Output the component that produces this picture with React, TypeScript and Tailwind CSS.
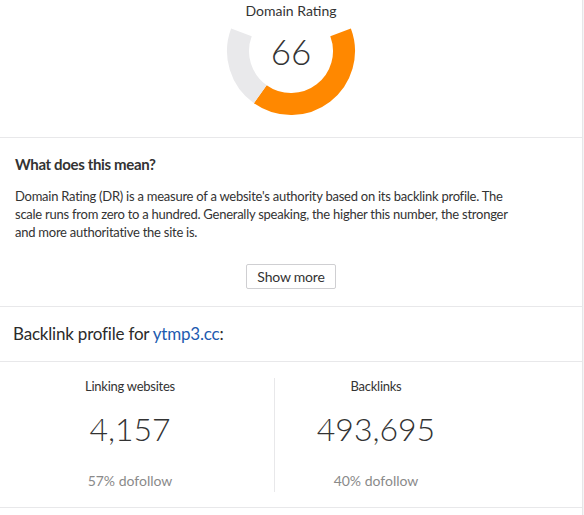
import React from "react";

const CX = 65;
const CY = 27;
const R = 53;

function pt(deg: number) {
  const a = (deg * Math.PI) / 180;
  return `${(CX + R * Math.sin(a)).toFixed(2)} ${(CY - R * Math.cos(a)).toFixed(2)}`;
}

function Gauge({ value }: { value: number }) {
  const start = 69.3;
  const end = 290.7;
  const mid = start + ((end - start) * value) / 100;
  return (
    <div className="relative w-[130px] h-[94px]">
      <svg width="130" height="94" viewBox="0 0 130 94">
        <path
          d={`M ${pt(start)} A ${R} ${R} 0 0 1 ${pt(mid)}`}
          fill="none"
          stroke="#ff8800"
          strokeWidth="22"
        />
        <path
          d={`M ${pt(mid)} A ${R} ${R} 0 0 1 ${pt(end)}`}
          fill="none"
          stroke="#e9e9eb"
          strokeWidth="22"
        />
      </svg>
      <div className="absolute left-0 right-0 top-[6px] text-center text-[35px] leading-[42px] font-light text-[#333]">
        {value}
      </div>
    </div>
  );
}

function Stat({ label, value, sub }: { label: string; value: string; sub: string }) {
  return (
    <div className="flex flex-col items-center pb-[3px]">
      <div className="text-[13px] leading-[17px] tracking-[-0.25px] text-[#333]">{label}</div>
      <div className="mt-[15px] text-[32px] leading-[38px] font-light text-[#333]">{value}</div>
      <div className="mt-[24px] text-[14px] leading-[17px] text-[#8a8a8a]">{sub}</div>
    </div>
  );
}

export default function App() {
  return (
    <div className="min-h-[515px] bg-[#f5f5f6] font-['Lato','Noto_Sans',sans-serif]">
      <div className="w-[583px] min-h-[515px] bg-white border-r border-[#e6e6e8]">
        <section className="flex flex-col items-center pt-[2px] pb-[19px] border-b border-[#e8e8ea]">
          <div className="text-[14px] leading-[17px] text-[#333]">Domain Rating</div>
          <div className="mt-[5px]">
            <Gauge value={66} />
          </div>
        </section>

        <section className="px-[15px] pt-[17px] pb-[17px] border-b border-[#e8e8ea]">
          <h3 className="text-[15px] leading-[18px] font-bold tracking-[-0.35px] text-[#333]">
            What does this mean?
          </h3>
          <p className="mt-[14px] max-w-[505px] text-[13px] leading-[18px] tracking-[-0.25px] text-[#333]">
            Domain Rating (DR) is a measure of a website's authority based on its backlink profile. The
            scale runs from zero to a hundred. Generally speaking, the higher this number, the stronger
            and more authoritative the site is.
          </p>
          <div className="mt-[23px] flex justify-center">
            <button
              type="button"
              className="h-[25px] px-[10px] rounded-[2px] border border-[#cfcfd2] bg-white text-[14px] leading-[17px] tracking-[-0.2px] text-[#333]"
            >
              Show more
            </button>
          </div>
        </section>

        <section className="h-[55px] px-[13px] flex items-center border-b border-[#e8e8ea]">
          <h2 className="text-[17px] leading-[22px] tracking-[-0.2px] text-[#2b2b2b]">
            Backlink profile for <a className="text-[#1d5bb0]">ytmp3.cc</a>:
          </h2>
        </section>

        <section className="flex pt-[16px] pb-[15px] border-b border-[#e8e8ea]">
          <div className="w-[260px]">
            <Stat label="Linking websites" value="4,157" sub="57% dofollow" />
          </div>
          <div className="ml-[14px] w-[203px] border-l border-[#e8e8ea]">
            <Stat label="Backlinks" value="493,695" sub="40% dofollow" />
          </div>
        </section>
      </div>
    </div>
  );
}
